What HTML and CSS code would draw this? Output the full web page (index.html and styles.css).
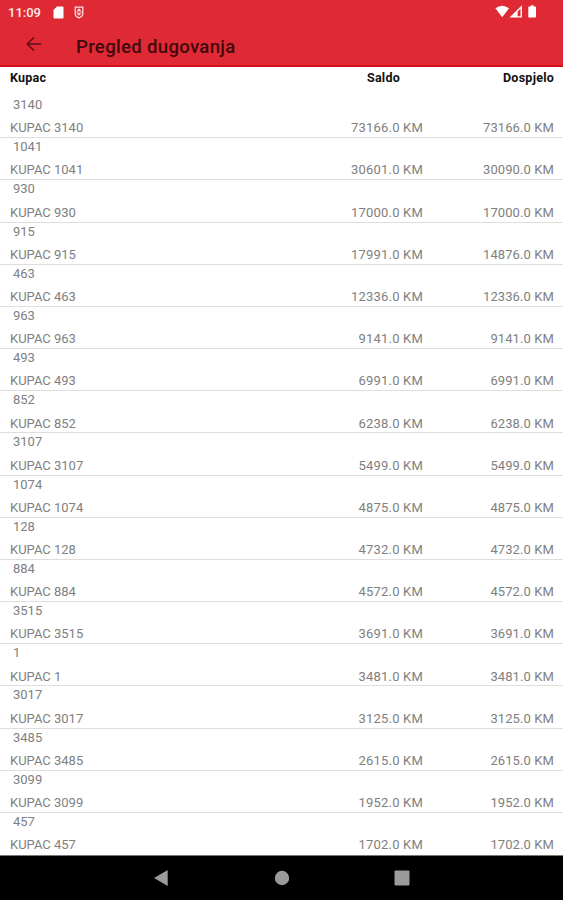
FILE: index.html
```html
<!DOCTYPE html>
<html lang="bs">
  <head>
    <meta charset="utf-8">
    <title>Pregled dugovanja</title>
    <link rel="stylesheet" href="styles.css">
  </head>
  <body>

    <header class="top">
      <div class="statusbar">
        <span class="time">11:09</span>
        <svg class="sd" width="11" height="13" viewBox="0 0 11 13"><path d="M4 0.5H9.5Q10.5 0.5 10.5 1.5V11.5Q10.5 12.5 9.5 12.5H1.5Q0.5 12.5 0.5 11.5V4Z" fill="#fff"/></svg>
        <svg class="shield" width="10" height="13" viewBox="0 0 10 13"><path d="M1.2 1.2H8.8V7.6Q8.8 10.7 5 11.8Q1.2 10.7 1.2 7.6Z" fill="none" stroke="#ffe3e3" stroke-width="1.2"/><path d="M5 2.2L7.4 5H2.6ZM2.6 7.2H7.4L5 9.8Z" fill="#ffe3e3"/><path d="M1.2 6.1H8.8" stroke="#ffd0d0" stroke-width="0.8"/></svg>
        <svg class="signals" width="44" height="14" viewBox="0 0 44 14">
          <path d="M0.4 3.2Q7.2 -1.8 14 3.2L7.2 12.2Z" fill="#fff"/>
          <path d="M26.2 1.9V11.9H16.2Z" fill="none" stroke="#fff" stroke-width="1.4"/>
          <path d="M22.6 5.5V12H16.5Z" fill="#fff"/>
          <path d="M35.7 0.2H38.6V1.4H40.1Q41 1.4 41 2.3V11.7Q41 12.6 40.1 12.6H34.2Q33.3 12.6 33.3 11.7V2.3Q33.3 1.4 34.2 1.4H35.7Z" fill="#fff"/>
        </svg>
      </div>
      <div class="toolbar">
        <svg class="back" width="16" height="16" viewBox="0 0 16 16"><path d="M15.2 8H1.4M7.8 1.5L1.3 8L7.8 14.5" fill="none" stroke="#5c1015" stroke-width="1.5"/></svg>
        <h1>Pregled dugovanja</h1>
      </div>
    </header>

    <div class="heading">
      <span class="kupac">Kupac</span>
      <span class="saldo">Saldo</span>
      <span class="dospjelo">Dospjelo</span>
    </div>

    <ul class="list">
      <li><span class="sifra">3140</span><div class="row"><span class="kupac">KUPAC 3140</span><span class="saldo">73166.0 KM</span><span class="dospjelo">73166.0 KM</span></div></li>
      <li><span class="sifra">1041</span><div class="row"><span class="kupac">KUPAC 1041</span><span class="saldo">30601.0 KM</span><span class="dospjelo">30090.0 KM</span></div></li>
      <li><span class="sifra">930</span><div class="row"><span class="kupac">KUPAC 930</span><span class="saldo">17000.0 KM</span><span class="dospjelo">17000.0 KM</span></div></li>
      <li><span class="sifra">915</span><div class="row"><span class="kupac">KUPAC 915</span><span class="saldo">17991.0 KM</span><span class="dospjelo">14876.0 KM</span></div></li>
      <li><span class="sifra">463</span><div class="row"><span class="kupac">KUPAC 463</span><span class="saldo">12336.0 KM</span><span class="dospjelo">12336.0 KM</span></div></li>
      <li><span class="sifra">963</span><div class="row"><span class="kupac">KUPAC 963</span><span class="saldo">9141.0 KM</span><span class="dospjelo">9141.0 KM</span></div></li>
      <li><span class="sifra">493</span><div class="row"><span class="kupac">KUPAC 493</span><span class="saldo">6991.0 KM</span><span class="dospjelo">6991.0 KM</span></div></li>
      <li><span class="sifra">852</span><div class="row"><span class="kupac">KUPAC 852</span><span class="saldo">6238.0 KM</span><span class="dospjelo">6238.0 KM</span></div></li>
      <li><span class="sifra">3107</span><div class="row"><span class="kupac">KUPAC 3107</span><span class="saldo">5499.0 KM</span><span class="dospjelo">5499.0 KM</span></div></li>
      <li><span class="sifra">1074</span><div class="row"><span class="kupac">KUPAC 1074</span><span class="saldo">4875.0 KM</span><span class="dospjelo">4875.0 KM</span></div></li>
      <li><span class="sifra">128</span><div class="row"><span class="kupac">KUPAC 128</span><span class="saldo">4732.0 KM</span><span class="dospjelo">4732.0 KM</span></div></li>
      <li><span class="sifra">884</span><div class="row"><span class="kupac">KUPAC 884</span><span class="saldo">4572.0 KM</span><span class="dospjelo">4572.0 KM</span></div></li>
      <li><span class="sifra">3515</span><div class="row"><span class="kupac">KUPAC 3515</span><span class="saldo">3691.0 KM</span><span class="dospjelo">3691.0 KM</span></div></li>
      <li><span class="sifra">1</span><div class="row"><span class="kupac">KUPAC 1</span><span class="saldo">3481.0 KM</span><span class="dospjelo">3481.0 KM</span></div></li>
      <li><span class="sifra">3017</span><div class="row"><span class="kupac">KUPAC 3017</span><span class="saldo">3125.0 KM</span><span class="dospjelo">3125.0 KM</span></div></li>
      <li><span class="sifra">3485</span><div class="row"><span class="kupac">KUPAC 3485</span><span class="saldo">2615.0 KM</span><span class="dospjelo">2615.0 KM</span></div></li>
      <li><span class="sifra">3099</span><div class="row"><span class="kupac">KUPAC 3099</span><span class="saldo">1952.0 KM</span><span class="dospjelo">1952.0 KM</span></div></li>
      <li><span class="sifra">457</span><div class="row"><span class="kupac">KUPAC 457</span><span class="saldo">1702.0 KM</span><span class="dospjelo">1702.0 KM</span></div></li>
    </ul>

    <nav class="navbar">
      <svg width="16" height="18" viewBox="0 0 16 18"><path d="M0 9L13.7 1V17Z" fill="#9b9b9b"/></svg>
      <svg width="16" height="18" viewBox="0 0 16 18"><circle cx="8" cy="9" r="7.2" fill="#9b9b9b"/></svg>
      <svg width="16" height="18" viewBox="0 0 16 18"><rect x="0.5" y="1.5" width="15" height="15" rx="1" fill="#9b9b9b"/></svg>
    </nav>

  </body>
</html>
```
FILE: styles.css
```css
* {
  box-sizing: border-box;
}

body {
  margin: 0;
  height: 900px;
  overflow: hidden;
  display: flex;
  flex-direction: column;
  background: #fff;
  font-family: Roboto, sans-serif;
  font-size: 13px;
}

/* status bar + toolbar */
.top {
  height: 67px;
  background: #df2935;
  border-bottom: 2px solid #d2101a;
}

.statusbar {
  display: flex;
  align-items: center;
  height: 24px;
  padding: 0 24px 0 8px;
}

.time {
  width: 45px;
  color: #ffe9e9;
  font-size: 13px;
  font-weight: 500;
}

.shield {
  margin-left: 10px;
}

.signals {
  margin-left: auto;
}

.toolbar {
  display: flex;
  align-items: center;
  height: 42px;
  padding-left: 26px;
}

.back {
  margin-top: -3px;
}

h1 {
  margin: 3px 0 0 34px;
  color: #42080c;
  font-size: 18.6px;
  font-weight: 500;
  line-height: 24px;
  letter-spacing: 0.3px;
}

/* column names */
.heading {
  display: flex;
  height: 29px;
  padding: 1px 9px 0 10px;
  color: #111;
  font-size: 12.5px;
  font-weight: 700;
  line-height: 19px;
  letter-spacing: 0.25px;
}

.kupac {
  width: 270px;
}

.saldo {
  width: 143px;
  text-align: right;
}

.dospjelo {
  flex: 1;
  text-align: right;
}

.heading .saldo {
  padding-right: 23px;
}

/* list of debts */
.list {
  flex: 1;
  min-height: 0;
  overflow: hidden;
  margin: 0;
  padding: 0;
  list-style: none;
  color: #808080;
}

.list li {
  height: 42.18px;
  border-bottom: 1px solid #dedede;
}

.list li:last-child {
  border-bottom: 0;
}

.sifra {
  display: block;
  height: 23.3px;
  padding-left: 13px;
  line-height: 18px;
}

.row {
  display: flex;
  padding: 0 9px 0 10px;
  line-height: 18px;
}

.row .saldo {
  letter-spacing: 0.2px;
}

.row .dospjelo {
  letter-spacing: 0.1px;
}

/* android buttons */
.navbar {
  display: flex;
  flex-shrink: 0;
  justify-content: center;
  align-items: center;
  gap: 104px;
  height: 45px;
  border-top: 1px solid #777;
  background: #000;
}
```
